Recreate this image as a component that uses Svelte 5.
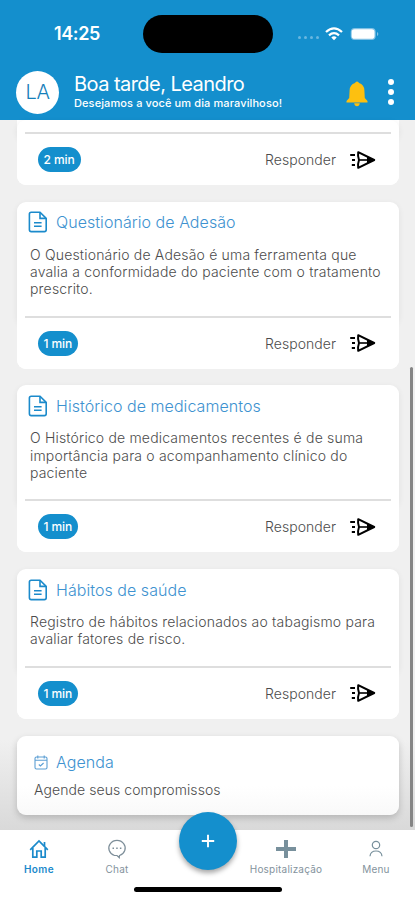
<script>
  const forms = [
    {
      title: "Questionário de Adesão",
      lines: [
        "O Questionário de Adesão é uma ferramenta que",
        "avalia a conformidade do paciente com o tratamento",
        "prescrito.",
      ],
      time: "1 min",
    },
    {
      title: "Histórico de medicamentos",
      lines: [
        "O Histórico de medicamentos recentes é de suma",
        "importância para o acompanhamento clínico do",
        "paciente",
      ],
      time: "1 min",
    },
    {
      title: "Hábitos de saúde",
      lines: [
        "Registro de hábitos relacionados ao tabagismo para",
        "avaliar fatores de risco.",
      ],
      time: "1 min",
    },
  ];
</script>

{#snippet footer(time)}
  <div class="card-footer">
    <hr />
    <div class="footer-row">
      <span class="time">{time}</span>
      <button class="answer">
        Responder
        <svg width="27" height="20" viewBox="0 0 27 20" fill="none" stroke="#000">
          <path d="M1.200 5H6M3 10H6M2.800 15H6" stroke-width="1.900" />
          <path d="M9.200 2.200 25.200 10 9.200 17.800Q8.600 14 10 10 8.600 6 9.200 2.200Z" stroke-width="2" stroke-linejoin="round" />
          <path d="M10.200 10H24" stroke-width="1.600" />
          <path d="M18 6.800 26 10 18 13.200Z" fill="#000" stroke="none" />
        </svg>
      </button>
    </div>
  </div>
{/snippet}

<div class="screen">
  <header>
    <div class="status">
      <span class="clock">14:25</span>
      <span class="island"></span>
      <span class="signal"><i></i><i></i><i></i><i></i></span>
      <svg class="wifi" width="18" height="14" viewBox="0 0 18 14" fill="none" stroke="#fff" stroke-width="2.300">
        <path d="M1 5Q9-2.200 17 5" />
        <path d="M4 8.300Q9 4 14 8.300" />
        <path d="M9 13.200 6.300 10.500Q9 8.200 11.700 10.500Z" fill="#fff" stroke="none" />
      </svg>
      <svg class="battery" width="29" height="14" viewBox="0 0 29 14">
        <rect x=".7" y="1" width="25" height="12" rx="4" fill="#7fc0e4" />
        <rect x="1.700" y="2.300" width="22.800" height="9.400" rx="2.800" fill="#fff" />
        <path d="M27 5v4q1.300-.6 1.300-2T27 5Z" fill="#7fc0e4" />
      </svg>
    </div>
    <div class="user">
      <div class="avatar">LA</div>
      <div class="greeting">
        <h1>Boa tarde, Leandro</h1>
        <p>Desejamos a você um dia maravilhoso!</p>
      </div>
      <svg class="bell" width="22" height="26" viewBox="0 0 22 26" fill="#fdc010">
        <path d="M11 .5q1.500 0 2 1.600Q18.200 3.700 18.400 9.500L18.800 17l2.700 3v1.500H.5V20L3.200 17 3.600 9.500Q3.800 3.700 9 2.100 9.500.5 11 .5Z" />
        <path d="M8.200 22.300h5.600q-.4 2.900-2.800 2.900T8.200 22.300Z" />
      </svg>
      <div class="dots"><i></i><i></i><i></i></div>
    </div>
  </header>

  <main>
    <section class="card first">
      <div class="card-body"></div>
      {@render footer("2 min")}
    </section>

    {#each forms as form}
      <section class="card">
        <div class="card-body">
          <h2>
            <svg width="20" height="22" viewBox="0 0 20 22" fill="none" stroke="#1b8acb" stroke-width="1.600">
              <path d="M3.200 1.200H12L18.200 7.400V18.800Q18.200 20.600 16.400 20.600H3.200Q1.400 20.600 1.400 18.800V3Q1.400 1.200 3.200 1.200Z" />
              <path d="M12 1.500V7.400H18" />
              <path d="M6 11.800h7.600M6 15.200h7.600" />
            </svg>
            {form.title}
          </h2>
          <p>
            {#each form.lines as line}
              <span>{line}</span>
            {/each}
          </p>
        </div>
        {@render footer(form.time)}
      </section>
    {/each}

    <section class="card agenda">
      <h2>
        <svg width="14" height="15" viewBox="0 0 14 15" fill="none" stroke="#5c9fd4" stroke-width="1.100">
          <rect x="1" y="2" width="12" height="12" rx="1.500" />
          <path d="M1 5.300H13M3.800.5V3.500M10.200.5V3.500M4.800 9.500l1.600 1.500L9.600 8" />
        </svg>
        Agenda
      </h2>
      <p>Agende seus compromissos</p>
    </section>
    <div class="scrollbar"></div>
  </main>

  <nav>
    <a class="tab active" href="#home">
      <svg width="20" height="20" viewBox="0 0 20 20" fill="none" stroke="#1b8acb" stroke-width="1.700">
        <path d="M1.200 10.800 10 2l8.800 8.800" />
        <path d="M3.800 9V18.200H7.800V12H12.200V18.200H16.200V9" />
        <path d="M15.500 3V7" />
      </svg>
      <span>Home</span>
    </a>
    <a class="tab chat" href="#chat">
      <svg width="20" height="20" viewBox="0 0 20 20" fill="none" stroke="#7d8e99" stroke-width="1.200">
        <path d="M12.500 16.500A8.200 7.700 0 1 0 7.500 16.500H10L12.300 18.700Z" />
        <path d="M5.500 9.300H14.800" stroke-width="1.500" stroke-dasharray="1.500 2.200" />
      </svg>
      <span>Chat</span>
    </a>
    <button class="add" aria-label="Adicionar">
      <svg width="14" height="14" viewBox="0 0 14 14" stroke="#fff" stroke-width="1.900">
        <path d="M7 .8V13.200M.8 7H13.200" />
      </svg>
    </button>
    <a class="tab hosp" href="#hospitalizacao">
      <svg width="22" height="20" viewBox="0 0 22 20" stroke="#78909c" stroke-width="4">
        <path d="M11 1V19M1 10H21" />
      </svg>
      <span>Hospitalização</span>
    </a>
    <a class="tab menu" href="#menu">
      <svg width="20" height="20" viewBox="0 0 20 20" fill="none" stroke="#78909c" stroke-width="1.200">
        <circle cx="10" cy="6" r="3.700" />
        <path d="M4 17.200Q4.500 12 10 12T16 17.200" />
      </svg>
      <span>Menu</span>
    </a>
    <div class="home-bar"></div>
  </nav>
</div>

<style>
  :global(body) {
    margin: 0;
  }

  .screen {
    width: 415px;
    height: 900px;
    display: flex;
    flex-direction: column;
    overflow: hidden;
    background: #f0f0f0;
    font-family: Inter, "Liberation Sans", sans-serif;
    color: #4c4c4c;
  }

  h1,
  h2,
  p {
    margin: 0;
    font-weight: 400;
    white-space: nowrap;
  }

  i {
    display: block;
    border-radius: 50%;
    background: #fff;
  }

  button {
    border: none;
    padding: 0;
    background: none;
    font: inherit;
    color: inherit;
  }

  header {
    flex: none;
    height: 120px;
    background: #148fcd;
    color: #fff;
  }

  .status {
    display: flex;
    align-items: center;
    height: 67px;
  }

  .clock {
    width: 89px;
    padding-left: 54px;
    font-size: 18px;
    font-weight: 600;
    letter-spacing: -0.4px;
  }

  .island {
    width: 130px;
    height: 38px;
    border-radius: 19px;
    background: #000;
  }

  .signal {
    display: flex;
    gap: 3px;
    margin: 8px 6px 0 25px;
  }

  .signal i {
    width: 3px;
    height: 3px;
    background: #69b7e0;
  }

  .battery {
    margin-left: 7px;
  }

  .user {
    display: flex;
    align-items: center;
    height: 50px;
    padding-left: 16px;
  }

  .avatar {
    width: 43px;
    height: 43px;
    border-radius: 50%;
    background: #fff;
    color: #1580ba;
    font-size: 20px;
    font-weight: 300;
    letter-spacing: -0.5px;
    line-height: 43px;
    text-align: center;
  }

  .greeting {
    width: 256px;
    padding: 0 16px 0 15px;
  }

  h1 {
    font-size: 20px;
    line-height: 23px;
    letter-spacing: -0.55px;
  }

  .greeting p {
    font-size: 11px;
    line-height: 15px;
    font-weight: 500;
    letter-spacing: 0.11px;
  }

  .bell {
    margin-top: 3px;
  }

  .dots {
    display: flex;
    flex-direction: column;
    gap: 4px;
    margin-left: 20px;
  }

  .dots i {
    width: 6px;
    height: 6px;
  }

  main {
    position: relative;
    flex: 1;
    display: flex;
    flex-direction: column;
    gap: 16.8px;
    min-height: 0;
    padding: 0 16px 0 17px;
    background: linear-gradient(#f0f0f0 620px, #d9d9d9 710px);
  }

  .card {
    flex: none;
    border-radius: 9px;
    background: #fff;
  }

  /* the body slides 8px under the footer, so its shadow ends below the divider */
  .card-body {
    box-sizing: border-box;
    margin-bottom: -8px;
    padding: 9px 0 26px 11px;
    border-radius: 9px;
    box-shadow: 0 2px 6px rgba(0, 0, 0, 0.07);
  }

  .first {
    border-radius: 0 0 9px 9px;
  }

  .first .card-body {
    height: 20px;
    padding: 0;
  }

  h2 {
    display: flex;
    align-items: center;
    gap: 8px;
    height: 23px;
    font-size: 16px;
    color: #3d92d0;
    font-weight: 300;
    letter-spacing: 0.05px;
  }

  .card-body p {
    padding: 12px 0 0 2px;
    font-size: 14px;
    font-weight: 300;
    letter-spacing: 0.18px;
  }

  .card-body p span {
    display: block;
    line-height: 17.3px;
  }

  .card-footer {
    position: relative;
    border-radius: 0 0 9px 9px;
    background: #fff;
  }

  hr {
    height: 2px;
    margin: 0 8px;
    border: none;
    background: #dedede;
  }

  .footer-row {
    display: flex;
    align-items: center;
    justify-content: space-between;
    height: 51px;
    padding: 0 23px 0 20.5px;
  }

  .time {
    padding: 0 6px;
    border-radius: 13px;
    background: #148fcd;
    color: #fff;
    font-size: 12px;
    font-weight: 500;
    letter-spacing: -0.1px;
    line-height: 25px;
  }

  .answer {
    display: flex;
    align-items: center;
    gap: 13px;
    font-size: 14px;
    font-weight: 300;
    letter-spacing: 0.05px;
  }

  .agenda {
    height: 79px;
    box-sizing: border-box;
    padding: 15px 0 0 17px;
    background: linear-gradient(#fff 50px, #f9f9f9);
    box-shadow: 0 3px 7px rgba(0, 0, 0, 0.18);
  }

  .agenda p {
    font-size: 14px;
    font-weight: 300;
    line-height: 31px;
    letter-spacing: 0.08px;
  }

  .scrollbar {
    position: absolute;
    top: 247px;
    right: 2px;
    width: 3px;
    height: 460px;
    border-radius: 2px;
    background: #858585;
  }

  nav {
    position: relative;
    flex: none;
    display: flex;
    height: 70px;
    background: #fff;
  }

  .tab {
    display: flex;
    flex: none;
    flex-direction: column;
    align-items: center;
    gap: 4px;
    width: 78px;
    padding-top: 9px;
    color: #84939d;
    font-size: 10px;
    letter-spacing: 0.2px;
    text-decoration: none;
  }

  .active {
    color: #1b8acb;
    font-weight: 600;
    letter-spacing: 0.4px;
  }

  .add {
    display: flex;
    flex: none;
    align-items: center;
    justify-content: center;
    width: 58px;
    height: 58px;
    margin: -18px 9px 0 23px;
    border-radius: 50%;
    background: #148fcd;
    box-shadow: 0 3px 5px rgba(0, 0, 0, 0.35);
  }

  .hosp {
    width: 80px;
  }

  .menu {
    width: 100px;
  }

  .home-bar {
    position: absolute;
    left: 134px;
    bottom: 8px;
    width: 148px;
    height: 5px;
    border-radius: 3px;
    background: #000;
  }
</style>
